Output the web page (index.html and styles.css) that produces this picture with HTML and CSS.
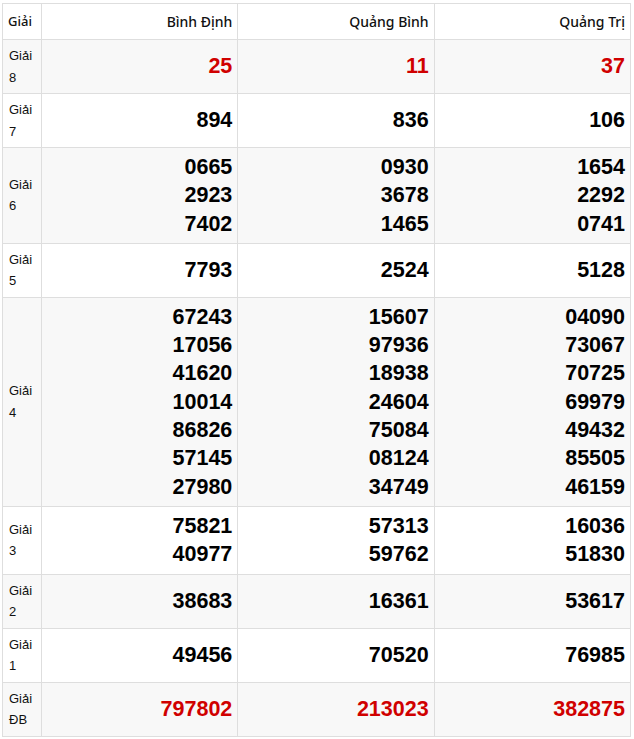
FILE: index.html
```html
<!DOCTYPE html>
<html lang="vi">
<head>
<meta charset="utf-8">
<title>Kết quả xổ số</title>
<link rel="stylesheet" href="styles.css">
</head>
<body>
<div class="wrap">
<table class="kq">
  <colgroup><col class="c-label"><col class="c-prov"><col class="c-prov"><col class="c-prov"></colgroup>
  <thead>
    <tr><th class="lbl">Giải</th><th>Bình Định</th><th>Quảng Bình</th><th>Quảng Trị</th></tr>
  </thead>
  <tbody>
    <tr class="alt"><td class="lbl">Giải<br>8</td><td class="red"><div>25</div></td><td class="red"><div>11</div></td><td class="red"><div>37</div></td></tr>
    <tr><td class="lbl">Giải<br>7</td><td><div>894</div></td><td><div>836</div></td><td><div>106</div></td></tr>
    <tr class="alt"><td class="lbl">Giải<br>6</td><td><div>0665</div><div>2923</div><div>7402</div></td><td><div>0930</div><div>3678</div><div>1465</div></td><td><div>1654</div><div>2292</div><div>0741</div></td></tr>
    <tr><td class="lbl">Giải<br>5</td><td><div>7793</div></td><td><div>2524</div></td><td><div>5128</div></td></tr>
    <tr class="alt"><td class="lbl">Giải<br>4</td>
      <td><div>67243</div><div>17056</div><div>41620</div><div>10014</div><div>86826</div><div>57145</div><div>27980</div></td>
      <td><div>15607</div><div>97936</div><div>18938</div><div>24604</div><div>75084</div><div>08124</div><div>34749</div></td>
      <td><div>04090</div><div>73067</div><div>70725</div><div>69979</div><div>49432</div><div>85505</div><div>46159</div></td></tr>
    <tr><td class="lbl">Giải<br>3</td><td><div>75821</div><div>40977</div></td><td><div>57313</div><div>59762</div></td><td><div>16036</div><div>51830</div></td></tr>
    <tr class="alt"><td class="lbl">Giải<br>2</td><td><div>38683</div></td><td><div>16361</div></td><td><div>53617</div></td></tr>
    <tr><td class="lbl">Giải<br>1</td><td><div>49456</div></td><td><div>70520</div></td><td><div>76985</div></td></tr>
    <tr class="alt"><td class="lbl">Giải<br>ĐB</td><td class="red"><div>797802</div></td><td class="red"><div>213023</div></td><td class="red"><div>382875</div></td></tr>
  </tbody>
</table>
</div>
</body>
</html>
```
FILE: styles.css
```css
html, body {
  margin: 0;
  padding: 0;
  background: #fff;
}
.wrap {
  padding: 3px 3px 0 2px;
}
.kq {
  width: 629px;
  border-collapse: collapse;
  table-layout: fixed;
  font-family: "Noto Sans", "Open Sans", sans-serif;
  color: #111;
}
.c-label { width: 39px; }
.kq th, .kq td {
  border: 1px solid #dedede;
  padding: 5px;
  text-align: right;
  vertical-align: middle;
}
.kq th {
  font-weight: 500;
  font-size: 14px;
  line-height: 25px;
  color: #111;
}
.kq th.lbl {
  font-size: 13px;
  text-align: left;
}
.kq td.lbl {
  text-align: left;
  font-size: 13px;
  line-height: 21.5px;
  padding: 5px 3px 5px 6px;
  color: #111;
  font-weight: 400;
}
.kq td {
  font-family: "Liberation Sans", Arial, sans-serif;
  font-weight: 700;
  font-size: 21.5px;
  line-height: 28.3px;
  color: #000;
}
.kq td.red { color: #d00000; }
.kq tr.alt td { background: #f8f8f8; }
```
